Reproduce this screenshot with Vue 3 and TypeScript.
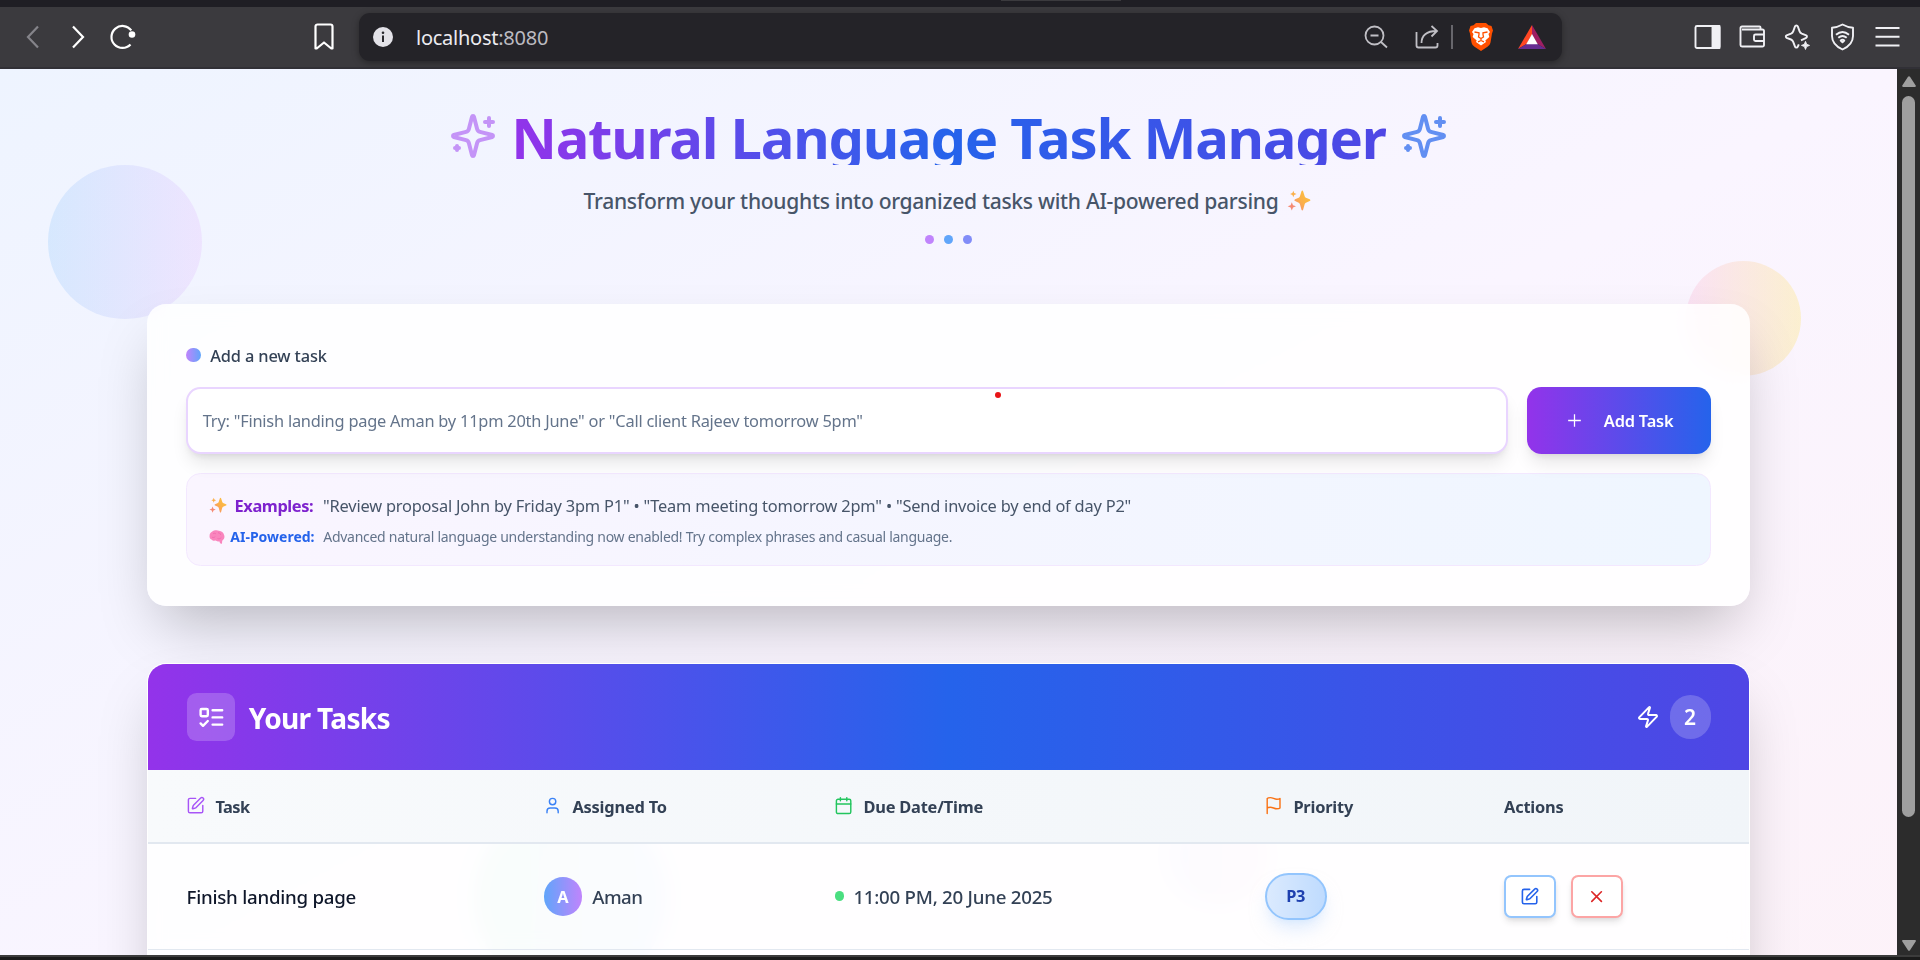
<script setup lang="ts">
interface Task {
  title: string
  assignee: string
  due: string
  priority: string
}

const tasks: Task[] = [
  { title: 'Finish landing page', assignee: 'Aman', due: '11:00 PM, 20 June 2025', priority: 'P3' },
]
const taskCount = 2

const placeholder = 'Try: "Finish landing page Aman by 11pm 20th June" or "Call client Rajeev tomorrow 5pm"'
const examples =
  '"Review proposal John by Friday 3pm P1" • "Team meeting tomorrow 2pm" • "Send invoice by end of day P2"'

const sparklePath =
  'M9.937 15.5A2 2 0 0 0 8.5 14.063l-6.135-1.582a.5.5 0 0 1 0-.962L8.5 9.936A2 2 0 0 0 9.937 8.5l1.582-6.135a.5.5 0 0 1 .963 0L14.063 8.5A2 2 0 0 0 15.5 9.937l6.135 1.581a.5.5 0 0 1 0 .964L15.5 14.063a2 2 0 0 0-1.437 1.437l-1.582 6.135a.5.5 0 0 1-.963 0z'
const editPath =
  'M18.375 2.625a1 1 0 0 1 3 3l-9.013 9.014a2 2 0 0 1-.853.505l-2.873.84a.5.5 0 0 1-.62-.62l.84-2.873a2 2 0 0 1 .506-.852z'
</script>

<template>
  <div class="window">
    <div class="tabstrip"><span class="tab-edge"></span></div>

    <div class="toolbar">
      <div class="nav">
        <svg class="back" width="14" height="24" viewBox="0 0 14 24"><path d="M12 1.5 2 12l10 10.5" /></svg>
        <svg class="forward" width="14" height="24" viewBox="0 0 14 24"><path d="m2 1.5 10 10.5L2 22.500" /></svg>
        <svg class="reload" width="28" height="26" viewBox="0 0 28 26">
          <path d="M21.500 20.500A11 11 0 1 1 22.300 6.400" />
          <circle cx="23" cy="10.500" r="3.300" />
        </svg>
        <svg class="bookmark" width="20" height="28" viewBox="0 0 20 28">
          <path d="M1.500 3.500a2 2 0 0 1 2-2h13a2 2 0 0 1 2 2v22h-1.200L10 19.500l-7.300 6H1.500z" />
        </svg>
      </div>
      <div class="address">
        <svg class="info" width="20" height="20" viewBox="0 0 20 20">
          <circle cx="10" cy="10" r="10" fill="#e3e2e8" />
          <circle cx="10" cy="5.800" r="1.300" fill="#29282d" />
          <rect x="9" y="8.500" width="2" height="6.500" fill="#29282d" />
        </svg>
        <span class="url">localhost<span class="port">:8080</span></span>
        <div class="address-actions">
          <svg class="line zoom-out" width="24" height="24" viewBox="0 0 24 24">
            <circle cx="10.500" cy="10.500" r="9" />
            <path d="M6.500 10.500h8M17 17l6 5.500" />
          </svg>
          <svg class="line share" width="24" height="24" viewBox="0 0 24 24">
            <path d="M1.500 7v13.500a2 2 0 0 0 2 2h17a2 2 0 0 0 2-2V18M6.500 18c0-7.500 5-12 15-12M16.500 1l5.500 5-5.500 5.500" />
          </svg>
          <span class="divider"></span>
          <svg class="brave" width="24" height="28" viewBox="0 0 24 28">
            <path fill="#ff5000" d="M7 0h10l2.500 2.200 3 .8L24 7.500l-1 3-1.500 9c-.4 2-1.500 3-3 4.200L12 28l-6.500-4.300c-1.500-1.200-2.600-2.200-3-4.200L1 10.500l-1-3L1.500 3l3-.8z" />
            <path fill="#fff" d="m12 5 3-.7 3.500 1L21 9l-1.500 2 .8 3-4 3.500.7 1.500-5 3.500L7 19l.7-1.500-4-3.500.8-3L3 9l2.500-3.700 3.500-1z" />
            <path fill="none" stroke="#ff5000" stroke-width="1.300" d="m5.500 9 4.500.8v1.700L9.500 14l2.500 1.500 2.500-1.500-.5-2.500V9.800l4.500-.8M12 15.500V18m-3 .8 3-1.300 3 1.300" />
          </svg>
          <svg class="bat" width="28" height="24" viewBox="0 0 28 24">
            <path fill="#ff4724" d="M14 0v9.500L8.500 19 0 24z" />
            <path fill="#9e1f63" d="M14 0v9.500l5.500 9.500 8.500 5z" />
            <path fill="#662d91" d="M0 24h28l-8.500-5h-11z" />
            <path fill="#fff" d="m14 9 5.800 10.200H8.200z" />
          </svg>
        </div>
      </div>
      <div class="tools">
        <svg width="27" height="26" viewBox="0 0 27 26">
          <rect x="1.500" y="2" width="24" height="22" rx="1.500" />
          <rect class="solid" x="18.500" y="2" width="7" height="22" />
        </svg>
        <svg width="27" height="26" viewBox="0 0 27 26">
          <path d="M21.500 5.500V3.500a1 1 0 0 0-1-1H3a1.500 1.500 0 0 0-1.500 1.500v17A1.500 1.500 0 0 0 3 22.500h20.500a1.500 1.500 0 0 0 1.500-1.500V7A1.500 1.500 0 0 0 23.500 5.500H3M25 10.500h-8.500a1.500 1.500 0 0 0-1.500 1.500v3.500a1.500 1.500 0 0 0 1.500 1.500H25" />
        </svg>
        <svg width="27" height="26" viewBox="0 0 27 26">
          <path d="M17 16.300 22.200 13.800a1.400 1.400 0 0 0 0-2.500l-4.400-1.700a4 4 0 0 1-2.200-2.300L13.800 2.400a1.500 1.500 0 0 0-2.800 0L9.200 7.300a4 4 0 0 1-2.200 2.300l-4.400 1.700a1.400 1.400 0 0 0 0 2.500L7 15.500a4 4 0 0 1 2.200 2.300l1.800 4.900a1.500 1.500 0 0 0 2.800 0l1-2.400" />
          <path class="solid thin" d="m21.500 17.300 1.200 2.900 2.900 1.200-2.900 1.200-1.200 2.900-1.200-2.900-2.900-1.200 2.900-1.200z" />
        </svg>
        <svg width="27" height="28" viewBox="0 0 27 28">
          <path d="M13.500 1.500c3.500 2 6.500 3 10.500 3.200v8.300c0 6-4 10.500-10.500 13.500C7 23.500 3 19 3 13V4.700c4-.2 7-1.200 10.500-3.200z" />
          <path d="M7 11.800c4-3.400 9-3.400 13 0M9.300 14.800c2.600-2.300 5.800-2.300 8.400 0M11.700 17.500c1.200-1 2.400-1 3.600 0l-1.800 1.800z" />
        </svg>
        <svg width="27" height="26" viewBox="0 0 27 26"><path d="M1.500 4h24M1.500 12.800h24M1.500 21.500h24" /></svg>
      </div>
    </div>

    <div class="viewport">
      <div class="page">
        <span class="blob blob-one"></span>
        <span class="blob blob-two"></span>
        <span class="blob blob-three"></span>
        <span class="blob blob-four"></span>

        <header class="hero">
          <div class="title-row">
            <svg class="hero-icon violet" viewBox="0 0 24 24"><path :d="sparklePath" /><path d="M20 3v4M22 5h-4M4 17v2M5 18H3" /></svg>
            <h1>Natural Language Task Manager</h1>
            <svg class="hero-icon blue" viewBox="0 0 24 24"><path :d="sparklePath" /><path d="M20 3v4M22 5h-4M4 17v2M5 18H3" /></svg>
          </div>
          <p class="subtitle">
            <span>Transform your thoughts into organized tasks with AI-powered parsing</span>
            <svg class="sparkles" width="24" height="22" viewBox="0 0 24 22">
              <defs>
                <linearGradient id="spark" x1="1" y1="0" x2="0" y2="1">
                  <stop offset="0" stop-color="#fcc53c" />
                  <stop offset=".55" stop-color="#fbb04a" />
                  <stop offset="1" stop-color="#f4837a" />
                </linearGradient>
              </defs>
              <path fill="url(#spark)" d="M14.500 1.200c.3-.9 1.300-.9 1.600 0l1.500 4.800c.3 1 .9 1.600 1.900 2l3.200 1.300c.9.400.9 1.400 0 1.800l-3.200 1.300c-1 .4-1.600 1-1.900 2l-1.500 5.400c-.3.9-1.300.9-1.600 0L13 14.400c-.3-1-.9-1.600-1.900-2l-3-1.300c-.9-.4-.9-1.400 0-1.800l3-1.300c1-.4 1.600-1 1.900-2z" />
              <path fill="#fbb04a" d="m6.300.8.9 2.300 2.300.9-2.300.9-.9 2.300-.9-2.300L3.100 4l2.300-.9z" />
              <path fill="#f58a74" d="m4.800 12.200 1.200 3 3 1.100-3 1.200-1.200 3-1.200-3-3-1.200 3-1.100z" />
            </svg>
          </p>
          <div class="dots"><i class="d1"></i><i class="d2"></i><i class="d3"></i></div>
        </header>

        <section class="card composer">
          <label class="field-label"><span class="label-dot"></span>Add a new task</label>
          <div class="entry">
            <div class="input">{{ placeholder }}</div>
            <button class="add">
              <svg width="19" height="19" viewBox="0 0 24 24"><path d="M4 12h16M12 4v16" /></svg>
              <span>Add Task</span>
            </button>
            <span class="marker"></span>
          </div>
          <div class="tips">
            <p class="tip">
              <svg class="tip-spark" width="18" height="17" viewBox="0 0 24 22">
                <path fill="url(#spark)" d="M14.500 1.200c.3-.9 1.300-.9 1.600 0l1.500 4.800c.3 1 .9 1.600 1.900 2l3.200 1.300c.9.400.9 1.400 0 1.800l-3.200 1.300c-1 .4-1.600 1-1.900 2l-1.500 5.400c-.3.9-1.300.9-1.600 0L13 14.400c-.3-1-.9-1.600-1.900-2l-3-1.300c-.9-.4-.9-1.400 0-1.800l3-1.300c1-.4 1.600-1 1.900-2z" />
                <path fill="#fbb04a" d="m6.300.8.9 2.300 2.300.9-2.300.9-.9 2.300-.9-2.300L3.100 4l2.300-.9z" />
                <path fill="#f58a74" d="m4.800 12.200 1.200 3 3 1.100-3 1.200-1.200 3-1.200-3-3-1.200 3-1.100z" />
              </svg>
              <b class="examples-label">Examples:</b>
              <span class="examples">{{ examples }}</span>
            </p>
            <p class="tip small">
              <svg class="brain" width="16" height="14" viewBox="0 0 16 14">
                <path fill="#f985bd" d="M3 1.800C5 .1 8 0 10 .8c2.500.2 4.500 2 5 4 .8 1.500.6 3.600-.6 4.700l-1.200 1.300-.2 2.700c-.8.500-1.700.2-2.100-.8l-.6-1.500c-1.400.5-2.800.2-3.800-.6-1.600.4-3.100-.1-4-1.200C1 9 .3 7.500.6 6 .4 4.200 1.400 2.500 3 1.800z" />
                <path fill="none" stroke="#f06aae" stroke-width=".9" d="M4 3.800c1-.8 2.200-.6 3 .2M9 2.800c1.300-.2 2.500.7 2.600 2M3 7.200c1.200.6 2.500.3 3.300-.6M8.500 8.500c1.500.6 3 .1 3.800-1" />
              </svg>
              <b class="ai-label">AI-Powered:</b>
              <span class="ai-text">Advanced natural language understanding now enabled! Try complex phrases and casual language.</span>
            </p>
          </div>
        </section>

        <section class="card board">
          <div class="board-head">
            <span class="board-icon">
              <svg viewBox="0 0 24 24"><rect x="3" y="5" width="6" height="6" rx="1" /><path d="m3 17 2 2 4-4M13 6h8M13 12h8M13 18h8" /></svg>
            </span>
            <h2>Your Tasks</h2>
            <svg class="zap" viewBox="0 0 24 24"><path d="M4 14a1 1 0 0 1-.78-1.630l9.900-10.200a.5.5 0 0 1 .86.460l-1.920 6.020A1 1 0 0 0 13 10h7a1 1 0 0 1 .78 1.630l-9.900 10.200a.5.5 0 0 1-.86-.460l1.920-6.020A1 1 0 0 0 11 14z" /></svg>
            <span class="count">{{ taskCount }}</span>
          </div>
          <div class="grid columns">
            <span class="col"><svg class="c-purple" viewBox="0 0 24 24"><path d="M12 3H5a2 2 0 0 0-2 2v14a2 2 0 0 0 2 2h14a2 2 0 0 0 2-2v-7" /><path :d="editPath" /></svg><b class="tight">Task</b></span>
            <span class="col"><svg class="c-blue" viewBox="0 0 24 24"><path d="M19 21v-2a4 4 0 0 0-4-4H9a4 4 0 0 0-4 4v2" /><circle cx="12" cy="7" r="4" /></svg><b>Assigned To</b></span>
            <span class="col"><svg class="c-green" viewBox="0 0 24 24"><path d="M8 2v4M16 2v4M3 10h18" /><rect x="3" y="4" width="18" height="18" rx="2" /></svg><b>Due Date/Time</b></span>
            <span class="col"><svg class="c-orange" viewBox="0 0 24 24"><path d="M4 15s1-1 4-1 5 2 8 2 4-1 4-1V3s-1 1-4 1-5-2-8-2-4 1-4 1zM4 22v-7" /></svg><b>Priority</b></span>
            <span class="col"><b>Actions</b></span>
          </div>
          <div v-for="task in tasks" :key="task.title" class="grid row">
            <span class="task-title">{{ task.title }}</span>
            <span class="person"><span class="avatar">{{ task.assignee[0] }}</span><span class="name">{{ task.assignee }}</span></span>
            <span class="due"><i></i>{{ task.due }}</span>
            <span><span class="priority">{{ task.priority }}</span></span>
            <span class="actions">
              <button class="act edit"><svg viewBox="0 0 24 24"><path d="M12 3H5a2 2 0 0 0-2 2v14a2 2 0 0 0 2 2h14a2 2 0 0 0 2-2v-7" /><path :d="editPath" /></svg></button>
              <button class="act remove"><svg viewBox="0 0 24 24"><path d="M18 6 6 18M6 6l12 12" /></svg></button>
            </span>
          </div>
          <div class="next-row"></div>
        </section>
      </div>

      <div class="scrollbar">
        <svg width="14" height="11" viewBox="0 0 14 11"><path d="M6 .8c.5-.8 1.500-.8 2 0l5.700 8.600c.5.8.1 1.600-.9 1.600H1.200c-1 0-1.400-.8-.9-1.600z" /></svg>
        <span class="thumb"></span>
        <svg class="down" width="14" height="11" viewBox="0 0 14 11"><path d="M6 10.200c.5.8 1.500.8 2 0l5.700-8.600c.5-.8.1-1.600-.9-1.600H1.200C.2 0-.2.8.3 1.600z" /></svg>
      </div>
    </div>
    <div class="taskbar"></div>
  </div>
</template>

<style>
body {
  margin: 0;
  overflow: hidden;
}
</style>

<style scoped>
* {
  box-sizing: border-box;
}
p, h1, h2 {
  margin: 0;
}
svg {
  display: block;
  flex: none;
}
button {
  font: inherit;
  border: 0;
  padding: 0;
}
.window {
  width: 1920px;
  height: 960px;
  display: flex;
  flex-direction: column;
  overflow: hidden;
  font-family: "Noto Sans", "Open Sans", sans-serif;
}

/* browser chrome */
.tabstrip {
  height: 7px;
  flex: none;
  background: #1f1e24;
}
.tab-edge {
  display: block;
  width: 120px;
  height: 1px;
  margin-left: 1001px;
  background: #3b3a3e;
}
.toolbar {
  height: 62px;
  flex: none;
  display: flex;
  align-items: center;
  background: #3b3a3e;
  border-bottom: 2px solid #313036;
}
.nav {
  width: 359px;
  display: flex;
  align-items: center;
  padding-left: 26px;
}
.nav svg {
  fill: none;
  stroke: #fff;
  stroke-width: 2.2;
}
.nav .back {
  stroke: #85848a;
}
.nav .forward {
  margin-left: 31px;
}
.nav .reload {
  margin-left: 24px;
}
.nav .reload circle {
  fill: #fff;
  stroke: none;
}
.nav .bookmark {
  margin-left: 177px;
  stroke-linejoin: round;
}
.address {
  width: 1203px;
  height: 48px;
  display: flex;
  align-items: center;
  padding: 0 16px 0 14px;
  border-radius: 11px;
  background: #242328;
  box-shadow: 0 2px 7px rgba(0, 0, 0, 0.35);
}
.url {
  margin-left: 23px;
  font-size: 20px;
  letter-spacing: -0.25px;
  color: #ecebf0;
}
.port {
  color: #bcbbc1;
}
.address-actions {
  margin-left: auto;
  display: flex;
  align-items: center;
}
.line {
  fill: none;
  stroke: #c0bfc5;
  stroke-width: 1.8;
}
.share {
  margin-left: 27px;
}
.divider {
  width: 2px;
  height: 24px;
  margin: 0 16px 0 12px;
  background: #67666c;
}
.bat {
  margin-left: 25px;
}
.tools {
  display: flex;
  align-items: center;
  gap: 18px;
  margin-left: 131.600px;
}
.tools svg {
  fill: none;
  stroke: #f0f0f4;
  stroke-width: 1.9;
  stroke-linejoin: round;
}
.tools .solid {
  fill: #f0f0f4;
}
.tools .thin {
  stroke-width: 0.8;
}

/* page */
.viewport {
  height: 886px;
  flex: none;
  display: flex;
  overflow: hidden;
}
.page {
  position: relative;
  width: 1897px;
  height: 1030px;
  padding: 38.4px 147px 0;
  background: linear-gradient(to bottom right, #eef4ff, #faf5ff, #fdf2f8);
}
.blob {
  position: absolute;
  border-radius: 50%;
}
.blob-one {
  left: 48px;
  top: 96px;
  width: 153.6px;
  height: 153.6px;
  background: linear-gradient(to right, #60b0fa, #dc9cfc);
  opacity: 0.18;
}
.blob-two {
  right: 96px;
  top: 192px;
  width: 115.2px;
  height: 115.2px;
  background: linear-gradient(to right, #f9a8d4, #fde047);
  opacity: 0.25;
}
.blob-three {
  left: 474px;
  top: 733px;
  width: 192px;
  height: 192px;
  background: linear-gradient(to right, #4ade80, #60a5fa);
  opacity: 0.2;
}
.blob-four {
  left: 1169px;
  top: 738px;
  width: 96px;
  height: 96px;
  background: linear-gradient(to right, #818cf8, #f472b6);
  opacity: 0.15;
}
.hero {
  position: relative;
  height: 196.6px;
  display: flex;
  flex-direction: column;
  align-items: center;
}
.title-row {
  display: flex;
  align-items: center;
  height: 57.6px;
}
.hero-icon {
  width: 48px;
  height: 48px;
  fill: none;
  stroke-width: 2;
  stroke-linecap: round;
  stroke-linejoin: round;
}
.hero-icon.violet {
  stroke: #c494f7;
}
.hero-icon.blue {
  stroke: #628ff2;
}
h1 {
  height: 57.6px;
  margin: 0 14.4px;
  font-size: 56.2px;
  line-height: 61px;
  font-weight: 700;
  letter-spacing: -1.24px;
  color: transparent;
  background: linear-gradient(to right, #9333ea, #2563eb, #4f46e5);
  background-clip: text;
  -webkit-background-clip: text;
}
.subtitle {
  display: flex;
  align-items: center;
  gap: 9px;
  margin-top: 19.2px;
  font-size: 21.06px;
  line-height: 33.6px;
  font-weight: 500;
  letter-spacing: -0.29px;
  color: #475569;
}
.sparkles {
  margin-right: 2px;
}
.dots {
  display: flex;
  gap: 9.6px;
  margin-top: 17px;
}
.dots i {
  width: 9.6px;
  height: 9.6px;
  border-radius: 50%;
}
.d1 {
  background: #c084fc;
}
.d2 {
  background: #60a5fa;
}
.d3 {
  background: #818cf8;
}
.card {
  position: relative;
  border-radius: 19.2px;
  background: rgba(255, 255, 255, 0.85);
  backdrop-filter: blur(9px);
  box-shadow: 0 30px 60px -14px rgba(0, 0, 0, 0.25);
}
.composer {
  height: 302px;
  padding: 39.2px;
}
.field-label {
  display: flex;
  align-items: center;
  gap: 9.6px;
  height: 24px;
  font-size: 16.4px;
  font-weight: 500;
  letter-spacing: -0.14px;
  color: #334155;
}
.label-dot {
  width: 14.4px;
  height: 14.4px;
  border-radius: 50%;
  background: linear-gradient(to right, #c084fc, #60a5fa);
}
.entry {
  position: relative;
  display: flex;
  gap: 19px;
  margin-top: 19.8px;
}
.input {
  flex: 1;
  height: 67px;
  padding-left: 14.6px;
  border: 2px solid #e9d5ff;
  border-radius: 14.4px;
  background: #fff;
  font-size: 16.4px;
  line-height: 63px;
  letter-spacing: -0.23px;
  color: #64748b;
  box-shadow: 0 12px 18px -3.6px rgba(0, 0, 0, 0.1), 0 4.8px 7.2px -4.8px rgba(0, 0, 0, 0.1);
}
.add {
  display: flex;
  align-items: center;
  width: 184px;
  height: 67px;
  padding-left: 38px;
  border-radius: 14.4px;
  background: linear-gradient(to right, #9333ea, #2563eb);
  color: #fff;
  font-size: 16.4px;
  font-weight: 600;
  letter-spacing: -0.19px;
  box-shadow: 0 12px 18px -3.6px rgba(0, 0, 0, 0.1), 0 4.8px 7.2px -4.8px rgba(0, 0, 0, 0.1);
}
.add svg {
  margin-right: 20px;
  stroke: #fff;
  stroke-width: 1.6;
}
.marker {
  position: absolute;
  left: 808.8px;
  top: 5px;
  width: 6px;
  height: 6px;
  border-radius: 50%;
  background: #e81416;
}
.tips {
  height: 93px;
  margin-top: 19.2px;
  padding: 19.2px 21.6px;
  border: 1.2px solid #f3e8ff;
  border-radius: 14.4px;
  background: linear-gradient(to right, #faf5ff, #eff6ff);
}
.tip {
  display: flex;
  align-items: center;
  height: 24px;
  font-size: 16.4px;
}
.tip-spark {
  margin-right: 7.8px;
}
.examples-label {
  width: 88.5px;
  letter-spacing: -0.41px;
  color: #7e22ce;
}
.examples {
  letter-spacing: -0.2px;
  color: #475569;
}
.tip.small {
  height: 19.2px;
  margin-top: 10px;
  font-size: 14px;
}
.brain {
  margin-right: 5.5px;
}
.ai-label {
  width: 93px;
  color: #2563eb;
}
.ai-text {
  letter-spacing: -0.28px;
  color: #64748b;
}

/* board */
.board {
  height: 360px;
  margin-top: 57px;
  border: 1px solid rgba(255, 255, 255, 0.8);
  border-top-width: 1.2px;
  overflow: hidden;
}
.board-head {
  height: 106px;
  display: flex;
  align-items: center;
  padding: 0 38.4px 0 39px;
  background: linear-gradient(to right, #9333ea, #2563eb, #4f46e5);
  color: #fff;
}
.board-icon {
  padding: 9.6px;
  border-radius: 9.6px;
  background: rgba(255, 255, 255, 0.2);
}
.board-icon svg {
  width: 28.8px;
  height: 28.8px;
}
.board-icon svg,
.zap {
  fill: none;
  stroke: #fff;
  stroke-width: 2;
  stroke-linecap: round;
  stroke-linejoin: round;
}
h2 {
  margin: 2px 0 0 13.8px;
  font-size: 28.1px;
  font-weight: 700;
  letter-spacing: -0.72px;
}
.zap {
  width: 24px;
  height: 24px;
  margin-left: auto;
}
.count {
  width: 41px;
  margin-left: 9.6px;
  border-radius: 22px;
  background: rgba(255, 255, 255, 0.2);
  font-size: 21px;
  font-weight: 600;
  line-height: 44px;
  text-align: center;
}
.grid {
  display: grid;
  grid-template-columns: 357px 291px 430px 239.400px 1fr;
  align-items: center;
  padding-left: 38.6px;
}
.columns {
  height: 74px;
  border-bottom: 2px solid #e2e8f0;
  background: linear-gradient(to right, #f8fafc, #f1f5f9);
  font-size: 16.4px;
  color: #334155;
}
.col {
  display: flex;
  align-items: center;
}
.col svg {
  width: 19.2px;
  height: 19.2px;
  margin: 0 10.2px 0 -0.6px;
  fill: none;
  stroke-width: 1.8;
  stroke-linecap: round;
  stroke-linejoin: round;
}
.col b {
  margin-top: 2px;
  font-weight: 700;
  letter-spacing: -0.2px;
}
.col .tight {
  letter-spacing: -0.5px;
}
.c-purple {
  stroke: #a855f7;
}
.c-blue {
  stroke: #3b82f6;
}
.c-green {
  stroke: #22c55e;
}
.c-orange {
  stroke: #f97316;
}
.row {
  height: 106px;
  border-bottom: 1.2px solid #e2e8f0;
  font-size: 18.7px;
  font-weight: 500;
  letter-spacing: -0.25px;
  color: #334155;
}
.task-title {
  color: #0f172a;
}
.person,
.due,
.actions {
  display: flex;
  align-items: center;
}
.avatar {
  width: 38.4px;
  height: 38.4px;
  border-radius: 50%;
  background: linear-gradient(to right, #60a5fa, #c084fc);
  color: #fff;
  font-size: 16.4px;
  font-weight: 700;
  line-height: 39px;
  text-align: center;
}
.name {
  margin-left: 10.2px;
  letter-spacing: -0.5px;
}
.due i {
  width: 9.6px;
  height: 9.6px;
  margin: -1px 9.2px 0 0;
  border-radius: 50%;
  background: #4ade80;
}
.priority {
  display: block;
  width: 62px;
  height: 47px;
  border: 2px solid #93c5fd;
  border-radius: 24px;
  background: linear-gradient(to right, #dbeafe, #bfdbfe);
  color: #1e40af;
  font-size: 16.4px;
  font-weight: 700;
  line-height: 42px;
  text-align: center;
  letter-spacing: -0.5px;
  box-shadow: 0 12px 18px -3.6px rgba(191, 219, 254, 0.5), 0 4.8px 7.2px -4.8px rgba(191, 219, 254, 0.5);
}
.act {
  display: flex;
  align-items: center;
  justify-content: center;
  width: 52px;
  height: 43px;
  border: 2px solid #93c5fd;
  border-radius: 7.2px;
  background: #fff;
  box-shadow: 0 4.8px 7.2px -1.2px rgba(0, 0, 0, 0.1), 0 2.4px 4.8px -2.4px rgba(0, 0, 0, 0.1);
}
.act svg {
  width: 19.2px;
  height: 19.2px;
  fill: none;
  stroke: #2563eb;
  stroke-width: 2;
  stroke-linecap: round;
  stroke-linejoin: round;
}
.remove {
  margin-left: 15px;
  border-color: #fca5a5;
}
.remove svg {
  stroke: #dc2626;
}
.next-row {
  height: 72px;
}

/* scrollbar */
.scrollbar {
  width: 23px;
  display: flex;
  flex-direction: column;
  align-items: center;
  padding: 7px 0 4px;
  background: #2c2c2c;
}
.scrollbar svg {
  fill: #9f9f9f;
}
.thumb {
  width: 13px;
  height: 721px;
  margin-top: 9px;
  border-radius: 7px;
  background: #9f9f9f;
}
.down {
  margin-top: auto;
}
.taskbar {
  height: 5px;
  flex: none;
  background: #1b1b1b;
  border-top: 2px solid #3c3c3c;
}
</style>
